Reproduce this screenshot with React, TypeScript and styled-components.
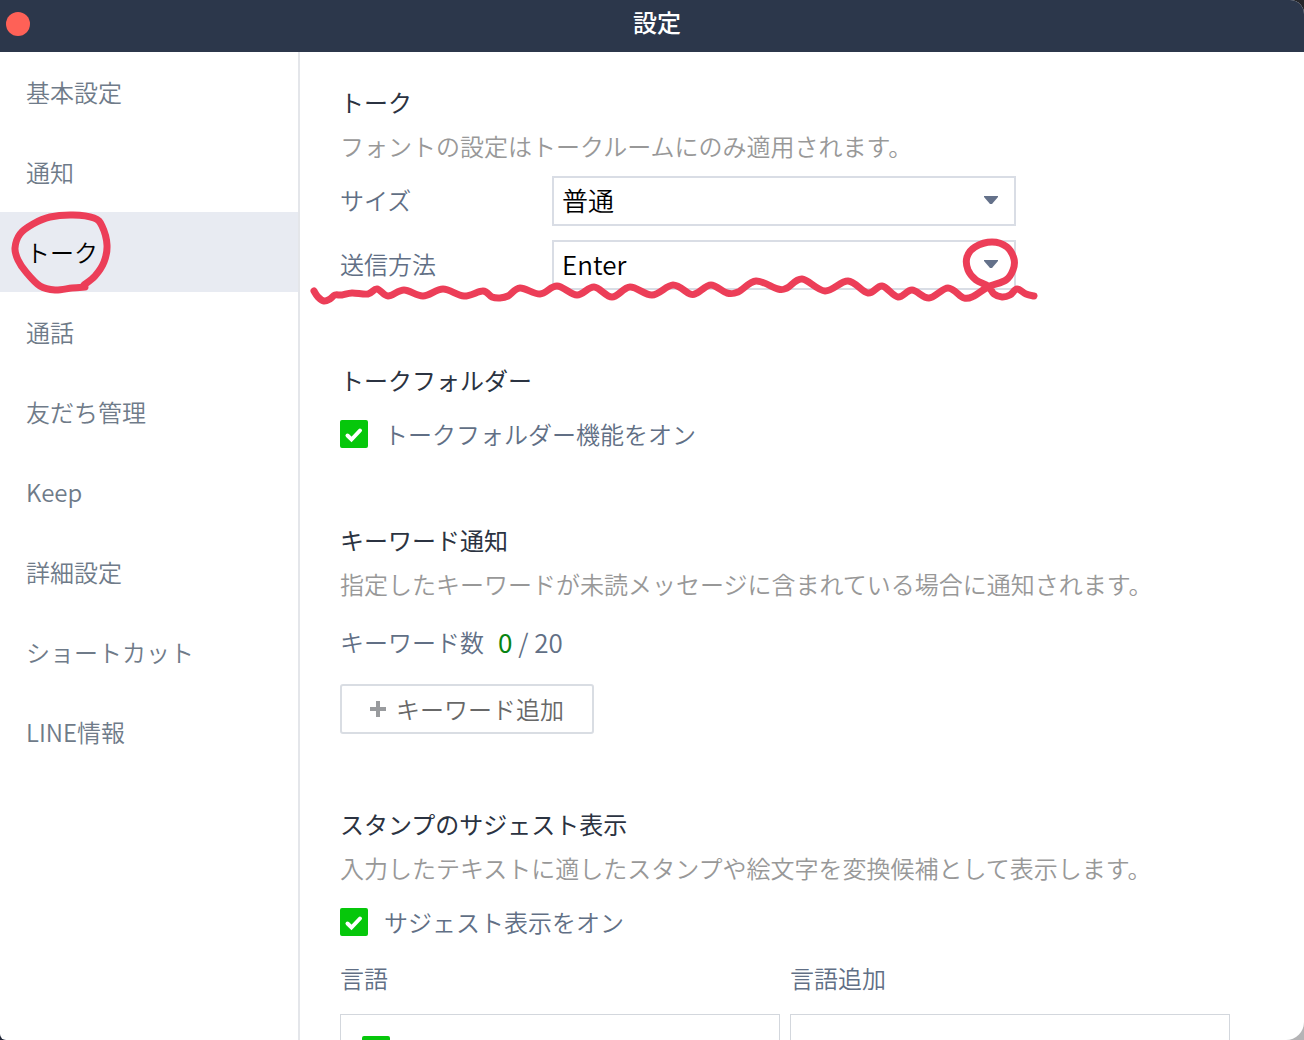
import React, { useState } from "react";
import styled, { createGlobalStyle } from "styled-components";

const GlobalStyle = createGlobalStyle`
  * { box-sizing: border-box; }
  body {
    margin: 0;
    background: linear-gradient(180deg, #26262a 50%, transparent 50%),
      linear-gradient(90deg, #1f2536 50%, #b4b4b6 50%);
    font-family: "Noto Sans CJK JP", "Noto Sans", sans-serif;
    font-size: 24px;
    font-weight: 350;
    line-height: 44px;
    color: #616f85;
    overflow: hidden;
  }
  button, select, input { font: inherit; color: inherit; margin: 0; }
`;

const Window = styled.div`
  display: flex;
  flex-direction: column;
  height: 100vh;
  background: #fff;
  border-radius: 0 14px 18px 6px;
  overflow: hidden;
`;

const TitleBar = styled.header`
  display: grid;
  grid-template-columns: 1fr auto 1fr;
  align-items: center;
  height: 52px;
  flex: none;
  padding: 0 6px 4px;
  background: #2c374b;
`;

const CloseButton = styled.button`
  width: 24px;
  height: 24px;
  padding: 0;
  border: 0;
  border-radius: 50%;
  background: #fe6157;
`;

const Title = styled.h1`
  margin: 0;
  padding: 0 0 4px 10px;
  font-size: 24px;
  font-weight: 500;
  color: #fff;
`;

const Body = styled.div`
  display: flex;
  flex: 1;
  min-height: 0;
`;

const Sidebar = styled.nav`
  flex: none;
  width: 300px;
  border-right: 2px solid #e4e6ea;
`;

const NavItem = styled.a<{ $active?: boolean }>`
  position: relative;
  display: flex;
  align-items: center;
  height: 80px;
  padding: 0 26px;
  text-decoration: none;
  color: ${(p) => (p.$active ? "#000" : "#6f7b89")};
  background: ${(p) => (p.$active ? "#e8ebf2" : "transparent")};
`;

const Main = styled.main`
  flex: 1;
  min-width: 0;
  padding: 28px 74px 0 40px;
  overflow: hidden;
`;

const Section = styled.section`
  margin-bottom: 60px;
`;

const SectionHead = styled.div`
  padding-bottom: 8px;
`;

const Heading = styled.h2`
  margin: 0;
  font-size: 24px;
  font-weight: 400;
  color: #2b3341;
`;

const Description = styled.p`
  margin: 0;
  color: #989898;
`;

const Fields = styled.div`
  display: flex;
  flex-direction: column;
  gap: 14px;
  padding-bottom: 8px;
`;

const Field = styled.div`
  position: relative;
  display: grid;
  grid-template-columns: 212px minmax(0, 464px);
  align-items: center;
`;

const FieldLabel = styled.label`
  padding-bottom: 2px;
`;

const SelectBox = styled.div`
  position: relative;
`;

const Select = styled.select`
  appearance: none;
  display: block;
  width: 100%;
  height: 50px;
  padding: 0 44px 6px 8px;
  border: 2px solid #d9dde5;
  border-radius: 0;
  background: #fff;
  font-size: 26px;
  color: #000;
`;

const Arrow = styled.svg`
  position: absolute;
  right: 18px;
  top: 20px;
  pointer-events: none;
`;

const CheckRow = styled.label`
  display: flex;
  align-items: center;
  gap: 16px;
  height: 48px;
`;

const CheckBox = styled.span`
  display: grid;
  flex: none;
  width: 28px;
  height: 28px;

  > * { grid-area: 1 / 1; }
`;

const CheckInput = styled.input`
  appearance: none;
  width: 28px;
  height: 28px;
  border: 2px solid #d9dde5;
  border-radius: 2px;

  &:checked {
    border-color: #06c70b;
    background: #06c70b;
  }
`;

const CheckMark = styled.svg`
  pointer-events: none;
`;

const CountRow = styled.div`
  display: flex;
  align-items: center;
  gap: 14px;
  height: 58px;
  margin-bottom: 12px;
  padding-bottom: 2px;
`;

const Count = styled.span`
  font-size: 26px;
`;

const CountNow = styled.span`
  font-weight: 400;
  color: #098412;
`;

const AddButton = styled.button`
  display: flex;
  align-items: center;
  gap: 10px;
  height: 50px;
  margin-bottom: 68px;
  padding: 0 28px;
  border: 2px solid #d9dde3;
  border-radius: 3px;
  background: #fff;
  color: #686868;
`;

const Languages = styled.div`
  display: grid;
  grid-template-columns: 1fr 1fr;
  column-gap: 10px;
`;

const LanguageTitle = styled.h3`
  margin: 0;
  padding-bottom: 4px;
  font-size: 24px;
  font-weight: 350;
  line-height: 64px;
`;

const LanguageList = styled.div`
  height: 240px;
  padding: 11px 21px;
  border: 1px solid #d3d7dd;
`;

const Marker = styled.svg<{ $left: number; $top: number }>`
  position: absolute;
  left: ${(p) => p.$left}px;
  top: ${(p) => p.$top}px;
  fill: none;
  stroke: #ec3e58;
  stroke-width: 7;
  stroke-linecap: round;
  stroke-linejoin: round;
  pointer-events: none;
`;

type Point = [number, number];

const WAVE: Point[] = [
  [314, 291], [318, 297], [324, 301], [330, 299], [335, 295], [342, 295], [352, 293],
  [368, 294], [377, 289], [388, 296], [404, 290], [423, 296], [443, 289], [464, 296],
  [483, 291], [492, 297], [500, 298], [508, 296], [520, 288], [540, 294], [557, 286],
  [577, 295], [594, 287], [612, 297], [630, 287], [652, 295], [673, 285], [690, 294],
  [697, 293], [711, 285], [727, 293], [738, 292], [756, 281], [778, 289], [787, 288],
  [802, 279], [825, 291], [848, 281], [868, 293], [882, 286], [898, 297], [912, 290],
  [929, 298], [948, 288], [964, 298], [974, 296], [988, 287], [1006, 280], [1013, 270],
  [1014, 259], [1007, 247], [992, 242], [975, 247], [967, 257], [968, 270], [976, 280],
  [988, 286], [994, 294], [1002, 297], [1010, 295], [1017, 289], [1026, 294], [1034, 296],
];

const LOOP: Point[] = [
  [84, 285], [95, 276], [104, 262], [107, 245], [102, 226], [94, 218], [73, 215],
  [50, 217], [33, 224], [20, 234], [15, 248], [18, 260], [26, 272], [40, 286],
  [55, 290], [72, 288], [85, 287],
];

/** Smooth freehand curve through all the given points. */
function smooth(points: Point[]): string {
  const at = (i: number) => points[Math.max(0, Math.min(points.length - 1, i))];
  let d = `M${points[0].join(" ")}`;
  for (let i = 0; i < points.length - 1; i++) {
    const [a, b, c, e] = [at(i - 1), at(i), at(i + 1), at(i + 2)];
    d += ` C${b[0] + (c[0] - a[0]) / 6} ${b[1] + (c[1] - a[1]) / 6}`;
    d += ` ${c[0] - (e[0] - b[0]) / 6} ${c[1] - (e[1] - b[1]) / 6} ${c[0]} ${c[1]}`;
  }
  return d;
}

function Check({ label, name }: { label?: string; name?: string }) {
  const [on, setOn] = useState(true);
  return (
    <CheckRow>
      <CheckBox>
        <CheckInput
          type="checkbox"
          aria-label={name}
          checked={on}
          onChange={() => setOn(!on)}
        />
        {on && (
          <CheckMark width="28" height="28" viewBox="0 0 28 28" aria-hidden="true">
            <path
              d="M7.5 15.5 L11.5 19.5 L20 10.5"
              fill="none"
              stroke="#fff"
              strokeWidth="4"
              strokeLinecap="round"
            />
          </CheckMark>
        )}
      </CheckBox>
      {label}
    </CheckRow>
  );
}

function Dropdown({ id, options }: { id: string; options: string[] }) {
  return (
    <SelectBox>
      <Select id={id}>
        {options.map((o) => (
          <option key={o}>{o}</option>
        ))}
      </Select>
      <Arrow width="14" height="8" viewBox="0 0 14 8" aria-hidden="true">
        <path d="M0 0H14V1L8 8H6L0 1Z" fill="#64718a" />
      </Arrow>
    </SelectBox>
  );
}

const NAV = [
  "基本設定", "通知", "トーク", "通話", "友だち管理",
  "Keep", "詳細設定", "ショートカット", "LINE情報",
];

export default function App() {
  return (
    <>
      <GlobalStyle />
      <Window lang="ja">
        <TitleBar>
          <CloseButton type="button" aria-label="閉じる" />
          <Title>設定</Title>
        </TitleBar>
        <Body>
          <Sidebar>
            {NAV.map((item) => {
              const active = item === "トーク";
              return (
                <NavItem
                  key={item}
                  href="#"
                  $active={active}
                  aria-current={active ? "page" : undefined}
                >
                  {item}
                  {active && (
                    <Marker
                      $left={8}
                      $top={-4}
                      width="108"
                      height="92"
                      viewBox="8 208 108 92"
                      aria-hidden="true"
                    >
                      <path d={smooth(LOOP)} />
                    </Marker>
                  )}
                </NavItem>
              );
            })}
          </Sidebar>
          <Main>
            <Section>
              <SectionHead>
                <Heading>トーク</Heading>
                <Description>フォントの設定はトークルームにのみ適用されます。</Description>
              </SectionHead>
              <Fields>
                <Field>
                  <FieldLabel htmlFor="size">サイズ</FieldLabel>
                  <Dropdown id="size" options={["普通", "大", "小"]} />
                </Field>
                <Field>
                  <FieldLabel htmlFor="send">送信方法</FieldLabel>
                  <Dropdown id="send" options={["Enter", "Shift + Enter"]} />
                  <Marker
                    $left={-32}
                    $top={-8}
                    width="736"
                    height="76"
                    viewBox="308 232 736 76"
                    aria-hidden="true"
                  >
                    <path d={smooth(WAVE)} />
                  </Marker>
                </Field>
              </Fields>
            </Section>

            <Section>
              <SectionHead>
                <Heading>トークフォルダー</Heading>
              </SectionHead>
              <Check label="トークフォルダー機能をオン" />
            </Section>

            <Section>
              <SectionHead>
                <Heading>キーワード通知</Heading>
                <Description>
                  指定したキーワードが未読メッセージに含まれている場合に通知されます。
                </Description>
              </SectionHead>
              <CountRow>
                <span>キーワード数</span>
                <Count>
                  <CountNow>0</CountNow> / 20
                </Count>
              </CountRow>
              <AddButton type="button">
                <svg width="16" height="16" viewBox="0 0 16 16" aria-hidden="true">
                  <path d="M8 0V16M0 8H16" stroke="#999b9e" strokeWidth="4" />
                </svg>
                キーワード追加
              </AddButton>
            </Section>

            <Section>
              <SectionHead>
                <Heading>スタンプのサジェスト表示</Heading>
                <Description>
                  入力したテキストに適したスタンプや絵文字を変換候補として表示します。
                </Description>
              </SectionHead>
              <Check label="サジェスト表示をオン" />
              <Languages>
                <LanguageTitle>言語</LanguageTitle>
                <LanguageTitle>言語追加</LanguageTitle>
                <LanguageList>
                  <Check name="日本語" />
                </LanguageList>
                <LanguageList />
              </Languages>
            </Section>
          </Main>
        </Body>
      </Window>
    </>
  );
}
